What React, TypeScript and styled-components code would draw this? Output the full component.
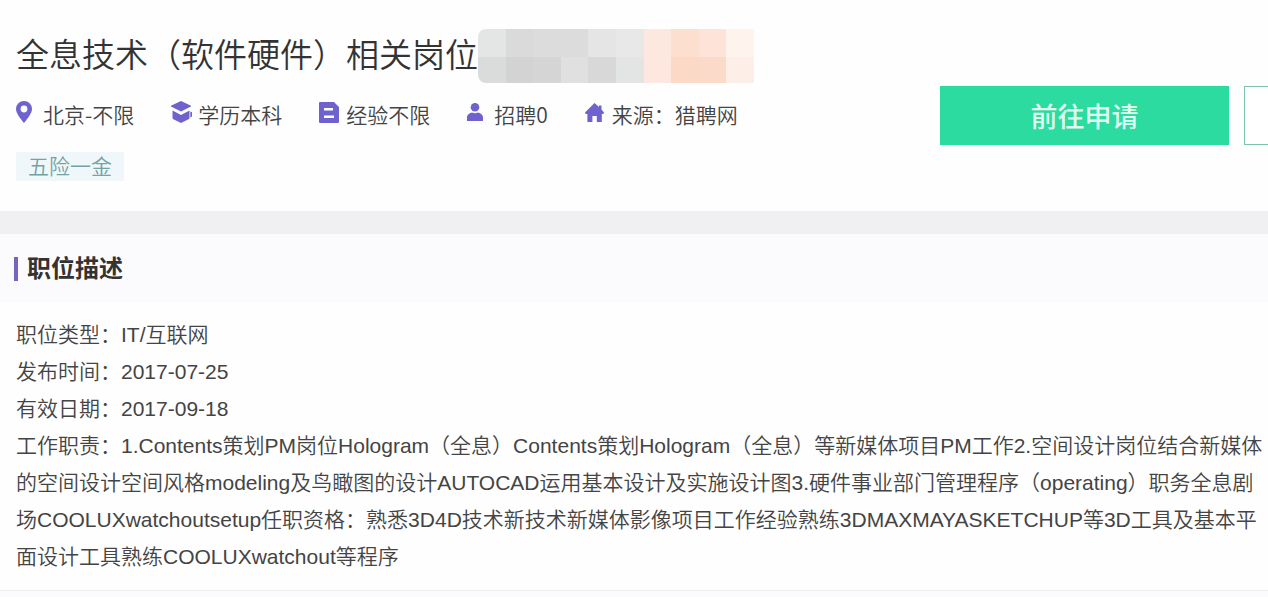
import React from "react";
import styled, { createGlobalStyle } from "styled-components";

const GlobalStyle = createGlobalStyle`
  * { box-sizing: border-box; }
  body {
    margin: 0;
    background: #fefefe;
    color: #444;
    font-family: "Liberation Sans", "Noto Sans CJK SC", sans-serif;
    font-size: 21px;
    font-weight: 350;
  }
`;

const Page = styled.main`
  width: 100%;
  overflow: hidden;
`;

const Header = styled.header`
  display: flex;
  align-items: flex-start;
  padding: 28px 0 30px 16px;
  border-bottom: 23px solid #f0eff1;
`;

const Info = styled.div`
  flex: 1;
  min-width: 0;
`;

const TitleRow = styled.div`
  display: flex;
  align-items: center;
  height: 56px;
`;

const Title = styled.h1`
  margin: 0;
  font-size: 33px;
  font-weight: 350;
  line-height: 56px;
  color: #333;
  white-space: nowrap;
`;

const Mosaic = styled.div`
  display: grid;
  grid-template-columns: repeat(10, 1fr);
  grid-template-rows: 28px 26px;
  width: 276px;
  border-radius: 8px 0 0 8px;
  overflow: hidden;
`;

const Cell = styled.span<{ $color: string }>`
  background: ${(p) => p.$color};
`;

const MetaList = styled.ul`
  display: flex;
  gap: 37px;
  margin: 15px 0 0;
  padding: 0;
  list-style: none;
`;

const MetaItem = styled.li`
  display: flex;
  align-items: center;
  height: 30px;
  font-family: "Noto Sans CJK SC", sans-serif;
  line-height: 30px;
  white-space: nowrap;
`;

const IconSlot = styled.span`
  display: flex;
  width: 27px;
  padding-bottom: 4px;

  svg {
    display: block;
    fill: #6f62cf;
  }
`;

const Tag = styled.span`
  display: inline-block;
  margin-top: 23px;
  padding: 0 12px;
  background: #eff7fa;
  color: #74a3a5;
  line-height: 29px;
  vertical-align: top;
`;

const Actions = styled.div`
  display: flex;
  flex: none;
  gap: 15px;
  width: 328px;
  margin-top: 58px;
  overflow: hidden;
`;

const Button = styled.button<{ $outline?: boolean }>`
  flex: none;
  width: 289px;
  height: 59px;
  padding: 0;
  border: 1px solid ${(p) => (p.$outline ? "#7cc4a8" : "#2bdb9f")};
  border-radius: 0;
  background: ${(p) => (p.$outline ? "#fff" : "#2bdb9f")};
  color: #e2fbf1;
  font-family: "Noto Sans CJK SC", sans-serif;
  font-size: 27px;
  font-weight: 500;
  cursor: pointer;
`;

const SectionHead = styled.div`
  display: flex;
  align-items: center;
  height: 69px;
  padding-left: 14px;
  background: #fbfafd;
`;

const SectionTitle = styled.h2`
  margin: 0;
  padding-left: 9px;
  border-left: 4px solid #7765bd;
  color: #333;
  font-size: 24px;
  font-weight: 700;
  line-height: 24px;
`;

const Description = styled.div`
  padding: 13px 4px 15px 16px;
  border-bottom: 1px solid #ececf0;
  line-height: 37px;

  p { margin: 0; }
`;

const Footer = styled.footer`
  height: 6px;
  background: #fbfafd;
`;

const MOSAIC = [
  "#e4e5e5", "#dadada", "#dcdcdc", "#dcdcdc", "#e5e5e5", "#e8e8e8", "#fde8e0", "#fddfd0", "#fde3d8", "#fef3ed",
  "#dadcdb", "#d3d3d3", "#d5d5d5", "#e0e0e0", "#d8d8d8", "#e3e4e4", "#fde7de", "#fcd9c7", "#fcdac9", "#fdefe8",
];

const PinIcon = () => (
  <svg width="16" height="22" viewBox="0 0 16 22" aria-hidden="true">
    <path fillRule="evenodd" d="M8 0a8 8 0 0 1 8 8c0 4-4 9-8 14C4 17 0 12 0 8a8 8 0 0 1 8-8zm0 4.6a3.4 3.4 0 1 0 0 6.8 3.4 3.4 0 0 0 0-6.8z" />
  </svg>
);

const DegreeIcon = () => (
  <svg width="21" height="22" viewBox="0 0 21 22" aria-hidden="true">
    <path d="M10 0l9.500 4.500a.6.6 0 0 1 0 1.200L10 10.600.5 5.700a.6.6 0 0 1 0-1.200z" />
    <path d="M1.500 9.500L10 14l8.500-4.500v7.300c0 .8-.5 1.200-1 1.500L10 22l-7.500-3.700c-.5-.3-1-.7-1-1.500z" />
    <path d="M19.300 10.500l1.700.8v4.200l-1.700 1z" />
  </svg>
);

const ExperienceIcon = () => (
  <svg width="21" height="21" viewBox="0 0 21 21" aria-hidden="true">
    <path fillRule="evenodd" d="M1 0h14l5 5v15a1 1 0 0 1-1 1H1a1 1 0 0 1-1-1V1a1 1 0 0 1 1-1zm4 6v2.500h9V6zm0 7.500V16h10v-2.500z" />
  </svg>
);

const PersonIcon = () => (
  <svg width="16" height="18" viewBox="0 0 16 18" aria-hidden="true">
    <circle cx="8" cy="4.300" r="4.300" />
    <path d="M0 18v-3.500C0 11.500 3 10 5 9.600c2 1 4 1 6 0 2 .4 5 1.900 5 4.900V18z" />
  </svg>
);

const HomeIcon = () => (
  <svg width="19" height="19" viewBox="0 0 19 19" aria-hidden="true">
    <path d="M9.500 0l4.500 4V2.500h2.500v4L19 9.500 18.300 11h-1.500v8h-5v-6H7.400v6h-5v-8H.7L0 9.500z" />
  </svg>
);

const META = [
  { icon: <PinIcon />, text: "北京-不限" },
  { icon: <DegreeIcon />, text: "学历本科" },
  { icon: <ExperienceIcon />, text: "经验不限" },
  { icon: <PersonIcon />, text: "招聘0" },
  { icon: <HomeIcon />, text: "来源：猎聘网" },
];

const DESCRIPTION = [
  "职位类型：IT/互联网",
  "发布时间：2017-07-25",
  "有效日期：2017-09-18",
  "工作职责：1.Contents策划PM岗位Hologram（全息）Contents策划Hologram（全息）等新媒体项目PM工作2.空间设计岗位结合新媒体的空间设计空间风格modeling及鸟瞰图的设计AUTOCAD运用基本设计及实施设计图3.硬件事业部门管理程序（operating）职务全息剧场COOLUXwatchoutsetup任职资格：熟悉3D4D技术新技术新媒体影像项目工作经验熟练3DMAXMAYASKETCHUP等3D工具及基本平面设计工具熟练COOLUXwatchout等程序",
];

export default function App() {
  return (
    <Page lang="zh-CN">
      <GlobalStyle />
      <Header>
        <Info>
          <TitleRow>
            <Title>全息技术（软件硬件）相关岗位</Title>
            <Mosaic aria-hidden="true">
              {MOSAIC.map((color, i) => (
                <Cell key={i} $color={color} />
              ))}
            </Mosaic>
          </TitleRow>
          <MetaList>
            {META.map((item) => (
              <MetaItem key={item.text}>
                <IconSlot>{item.icon}</IconSlot>
                {item.text}
              </MetaItem>
            ))}
          </MetaList>
          <Tag>五险一金</Tag>
        </Info>
        <Actions>
          <Button type="button">前往申请</Button>
          <Button type="button" $outline aria-label="收藏" />
        </Actions>
      </Header>
      <section>
        <SectionHead>
          <SectionTitle>职位描述</SectionTitle>
        </SectionHead>
        <Description>
          {DESCRIPTION.map((line) => (
            <p key={line}>{line}</p>
          ))}
        </Description>
      </section>
      <Footer />
    </Page>
  );
}
